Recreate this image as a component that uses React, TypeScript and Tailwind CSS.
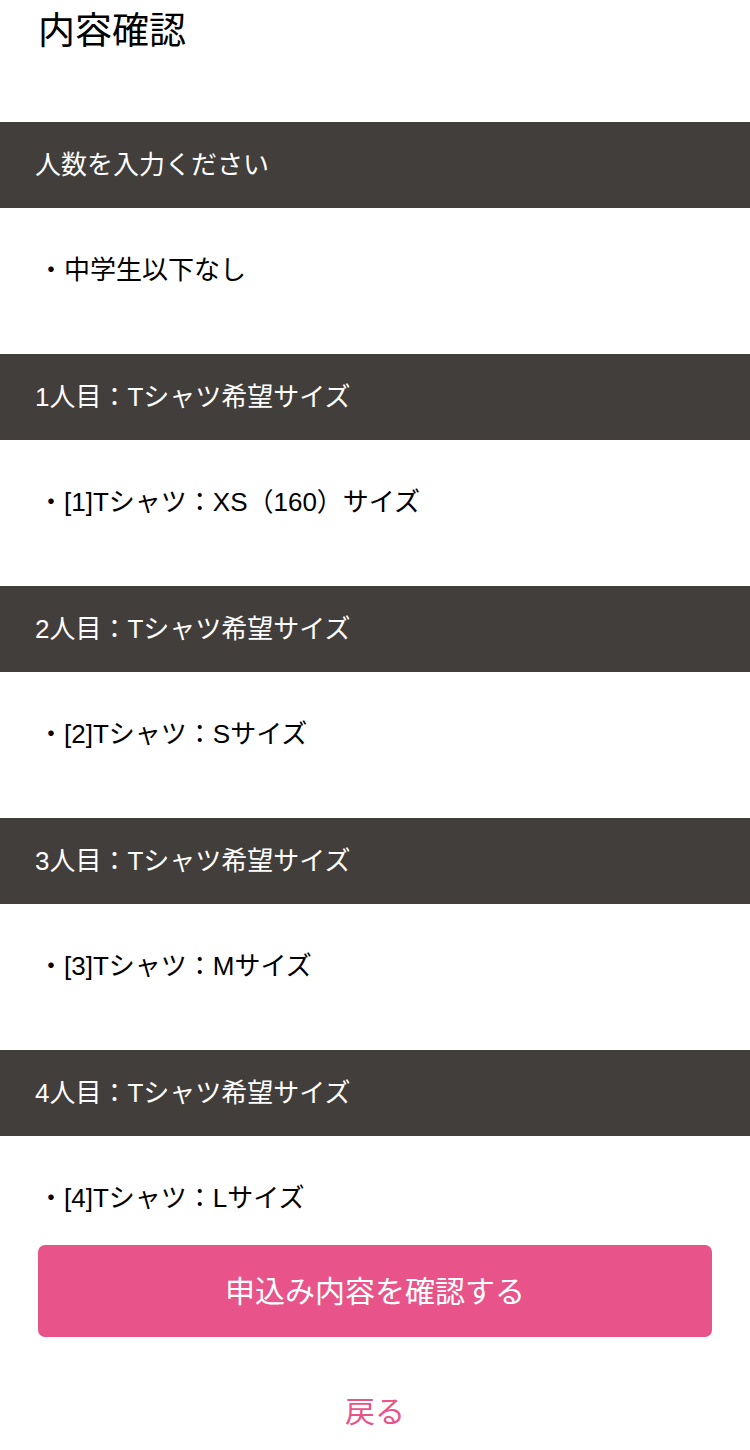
const sections = [
  { title: '人数を入力ください', value: '・中学生以下なし' },
  { title: '1人目：Tシャツ希望サイズ', value: '・[1]Tシャツ：XS（160）サイズ' },
  { title: '2人目：Tシャツ希望サイズ', value: '・[2]Tシャツ：Sサイズ' },
  { title: '3人目：Tシャツ希望サイズ', value: '・[3]Tシャツ：Mサイズ' },
  { title: '4人目：Tシャツ希望サイズ', value: '・[4]Tシャツ：Lサイズ' },
];

export default function App() {
  return (
    <div
      className="w-[750px] min-h-[1450px] bg-white text-black"
      style={{ fontFamily: '"Liberation Sans", "Noto Sans CJK JP", sans-serif' }}
    >
      {/* Title */}
      <h1 className="px-[38px] pt-[10px] h-[122px] text-[37px] leading-[44px] font-normal">内容確認</h1>

      {/* Sections */}
      {sections.map((s, i) => (
        <section key={i}>
          <div className="h-[86px] bg-[#423e3b] flex items-center px-[35px] text-white text-[26px]">
            {s.title}
          </div>
          <div
            className={
              i === sections.length - 1
                ? 'pt-[48px] pb-[33px] px-[38px]'
                : 'pt-[48px] pb-[70px] px-[38px]'
            }
          >
            <p className="text-[26px] leading-[28px]">{s.value}</p>
          </div>
        </section>
      ))}

      {/* Actions */}
      <div className="px-[38px]">
        <button className="w-full h-[92px] rounded-[7px] bg-[#e8548a] text-white text-[30px]">
          申込み内容を確認する
        </button>
      </div>
      <div className="mt-[51px] text-center text-[#e8548a] text-[30px] leading-[48px]">戻る</div>
    </div>
  );
}
